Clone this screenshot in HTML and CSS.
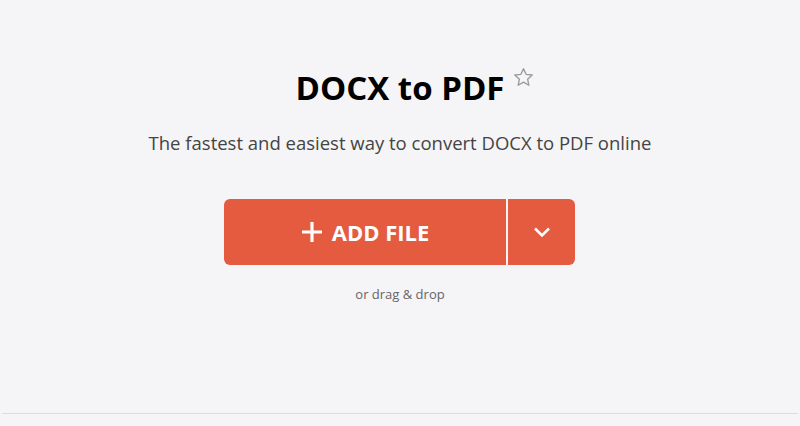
FILE: index.html
```html
<!DOCTYPE html>
<html lang="en">
<head>
<meta charset="utf-8">
<link rel="stylesheet" href="styles.css">
</head>
<body>
<main class="hero">
  <h1 class="title">DOCX to PDF<span class="star"><svg width="23" height="23" viewBox="0 0 24 24"><path d="M12 2.8l2.7 5.9 6.4.7-4.8 4.4 1.3 6.3L12 16.9l-5.6 3.2 1.3-6.3-4.8-4.4 6.4-.7z" fill="none" stroke="#9a9a9a" stroke-width="1.4" stroke-linejoin="round"/></svg></span></h1>
  <p class="subtitle">The fastest and easiest way to convert DOCX to PDF online</p>
  <div class="upload">
    <button class="add-btn"><svg class="plus" width="22" height="22" viewBox="0 0 22 22"><path d="M11 1v20M1 11h20" stroke="#fff" stroke-width="3.2"/></svg><span>ADD FILE</span></button>
    <button class="drop-btn"><svg width="18" height="12" viewBox="0 0 18 12"><path d="M2 2.5l7 7 7-7" fill="none" stroke="#fff" stroke-width="2.6"/></svg></button>
  </div>
  <p class="hint">or drag &amp; drop</p>
</main>
<div class="divider"></div>
</body>
</html>
```
FILE: styles.css
```css
html, body { margin: 0; padding: 0; }
body {
  background: #f5f4f6;
  font-family: "Open Sans", "Noto Sans", sans-serif;
  width: 800px;
  height: 426px;
  overflow: hidden;
}
.hero {
  display: flex;
  flex-direction: column;
  align-items: center;
  padding-top: 64px;
  height: 349px;
  box-sizing: border-box;
}
.title {
  margin: 0;
  font-size: 33px;
  font-weight: 700;
  color: #000;
  line-height: 48px;
  position: relative;
}
.star {
  position: absolute;
  left: calc(100% + 8px);
  top: 2px;
}
.star svg { display: block; }
.subtitle {
  margin: 18px 0 0;
  font-size: 18.5px;
  color: #444;
  line-height: 26px;
}
.upload {
  display: flex;
  margin-top: 43px;
  gap: 2px;
  padding-right: 1px;
}
.add-btn, .drop-btn {
  border: none;
  background: #e45b40;
  color: #fff;
  height: 66px;
  display: flex;
  align-items: center;
  justify-content: center;
  cursor: pointer;
  font-family: inherit;
}
.add-btn {
  width: 282px;
  border-radius: 6px 0 0 6px;
  font-size: 22px;
  font-weight: 700;
  gap: 9px;
}
.drop-btn {
  width: 67px;
  border-radius: 0 6px 6px 0;
}
.hint {
  margin: 20px 0 0;
  font-size: 13px;
  color: #666;
}
.divider {
  margin: 64px 2px 0;
  height: 1px;
  background: #dedce0;
}
```
